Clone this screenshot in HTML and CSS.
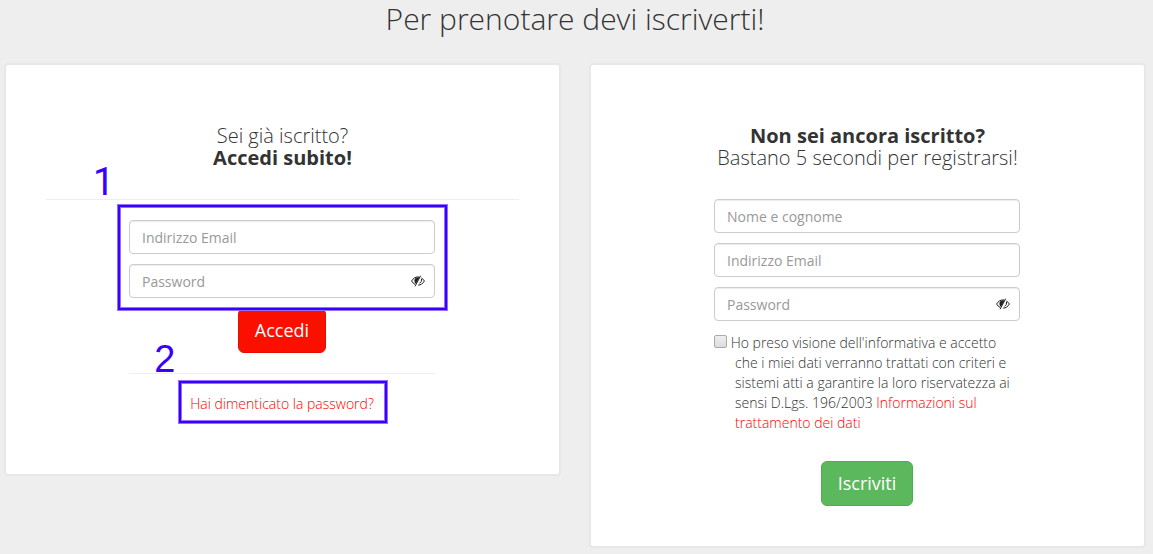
FILE: index.html
```html
<!DOCTYPE html>
<html lang="it">
<head>
<meta charset="utf-8">
<meta name="viewport" content="width=device-width, initial-scale=1">
<title>Per prenotare devi iscriverti!</title>
<link rel="stylesheet" href="styles.css">
</head>
<body>
<svg class="sprite" aria-hidden="true">
  <symbol id="eye-close" viewBox="0 0 14 12">
    <path d="M.6 6C2.2 3.200 4.500 1.900 7 1.900q.8 0 1.500.2M10.500 3Q12.300 4.100 13.400 6C11.900 8.700 9.700 10.100 7.200 10.100M.6 6q1.300 2.300 3.400 3.400" fill="none" stroke="currentColor" stroke-width="1"/>
    <path d="M4.300 3.200Q6.300 2 8.600 2.300L4.800 9Q3.400 7.600 3.400 5.700 3.400 4.200 4.300 3.200Z" fill="currentColor"/>
    <path d="M9.700.7 4 11.300M10.500 3.800q.7 2.900-2 4.600" fill="none" stroke="currentColor" stroke-width="1"/>
  </symbol>
</svg>
<main class="page">
  <h1 class="title">Per prenotare devi iscriverti!</h1>
  <div class="columns">
    <section class="card card-login">
      <h2 class="heading">Sei già iscritto?<br><strong>Accedi subito!</strong></h2>
      <hr class="rule">
      <form class="form">
        <div class="fields marked">
          <input class="control" type="email" placeholder="Indirizzo Email" aria-label="Indirizzo Email">
          <div class="password">
            <input class="control" type="password" placeholder="Password" aria-label="Password">
            <button class="reveal" type="button" aria-label="Mostra password"><svg class="eye"><use href="#eye-close"/></svg></button>
          </div>
          <span class="frame frame-fields"></span>
          <span class="number number-fields">1</span>
        </div>
        <button class="button button-red" type="submit">Accedi</button>
        <hr class="rule rule-form">
        <p class="forgot marked">
          <a class="link" href="#">Hai dimenticato la password?</a>
          <span class="frame frame-link"></span>
          <span class="number number-link">2</span>
        </p>
      </form>
    </section>
    <section class="card card-signup">
      <h2 class="heading"><strong>Non sei ancora iscritto?</strong><br>Bastano 5 secondi per registrarsi!</h2>
      <form class="form">
        <div class="fields">
          <input class="control" type="text" placeholder="Nome e cognome" aria-label="Nome e cognome">
          <input class="control" type="email" placeholder="Indirizzo Email" aria-label="Indirizzo Email">
          <div class="password">
            <input class="control" type="password" placeholder="Password" aria-label="Password">
            <button class="reveal" type="button" aria-label="Mostra password"><svg class="eye"><use href="#eye-close"/></svg></button>
          </div>
        </div>
        <p class="consent"><input class="check" type="checkbox" id="privacy"> <label for="privacy">Ho preso visione dell'informativa e accetto che i miei dati verranno trattati con criteri e sistemi atti a garantire la loro riservatezza ai sensi D.Lgs. 196/2003</label> <a class="link" href="#">Informazioni sul trattamento dei dati</a></p>
        <button class="button button-green" type="submit">Iscriviti</button>
      </form>
    </section>
  </div>
</main>
</body>
</html>
```

FILE: styles.css
```css
* {
  box-sizing: border-box;
}

body {
  margin: 0;
  background: #eee;
  color: #333;
  font: 300 14px/20px "Open Sans", "Noto Sans", sans-serif;
}

.sprite {
  display: none;
}

.page {
  padding: 2px 8px 7px 5px;
}

.title {
  margin: 0 0 29px;
  font-size: 30px;
  font-weight: 300;
  line-height: 33px;
  text-align: center;
}

.columns {
  display: grid;
  grid-template-columns: 1fr 1fr;
  align-items: start;
  gap: 30px;
}

.card {
  padding: 60px 40px 40px;
  border: 1px solid #e7e7e7;
  border-radius: 3px;
  background: #fff;
  box-shadow: 0 0 1px 1px #e7e7e7;
}

.card-login {
  padding-bottom: 60px;
}

.heading {
  margin: 0 0 30px;
  font-size: 20px;
  font-weight: 300;
  line-height: 22px;
  text-align: center;
}

.heading strong {
  font-weight: 700;
}

.rule {
  margin: 0 0 20px;
  border: 0;
  border-top: 1px solid #eee;
}

.form {
  display: flex;
  flex-direction: column;
  align-items: center;
  margin: 0 84px 0 83px;
}

.fields {
  display: grid;
  gap: 10px;
  width: 100%;
  margin-bottom: 10px;
}

.control {
  display: block;
  width: 100%;
  height: 34px;
  padding: 6px 12px;
  border: 1px solid #ccc;
  border-radius: 4px;
  background: #fff;
  box-shadow: inset 0 1px 1px rgba(0, 0, 0, 0.075);
  color: #555;
  font: 400 14px/20px "Open Sans", "Noto Sans", sans-serif;
}

.control::placeholder {
  color: #999;
  opacity: 1;
}

.password {
  position: relative;
}

.reveal {
  position: absolute;
  top: 0;
  right: 0;
  display: grid;
  place-items: center;
  width: 34px;
  height: 34px;
  padding: 0;
  border: 0;
  background: none;
  color: #222;
}

.eye {
  width: 14px;
  height: 12px;
}

.button {
  padding: 10px 16px;
  border: 1px solid;
  border-radius: 6px;
  color: #fff;
  font: 400 18px/23px "Open Sans", "Noto Sans", sans-serif;
}

.button-red {
  border-color: #e31000;
  background: #fb1000;
}

.button-green {
  border-color: #4cae4c;
  background: #5cb85c;
}

.rule-form {
  width: 100%;
  margin-top: 20px;
}

.forgot {
  margin: 0;
}

.link {
  color: #f00;
  text-decoration: none;
}

.consent {
  margin: 2px 0 28px;
  padding-left: 21px;
  text-indent: -21px;
}

.check {
  appearance: none;
  width: 13px;
  height: 13px;
  margin: 0;
  border: 1px solid #aaa;
  border-radius: 2px;
  background: linear-gradient(#eee, #ddd);
  vertical-align: baseline;
}

.check:checked {
  background: #666;
}

.marked {
  position: relative;
}

.frame {
  position: absolute;
  z-index: 1;
  border: 2px solid #3a00ff;
  box-shadow: 0 0 0 1px #9470ff, inset 0 0 0 1px #9470ff;
  pointer-events: none;
}

.frame-fields {
  inset: -15px -12px -12px -11px;
}

.frame-link {
  inset: -13px -13px -9px -11px;
}

.number {
  position: absolute;
  color: #3a00ff;
  font: 400 38px/38px "Liberation Sans", Arial, sans-serif;
}

.number-fields {
  top: -57px;
  left: -36px;
  font-family: Roboto, Arial, sans-serif;
}

.number-link {
  top: -54px;
  left: -36px;
}
```
